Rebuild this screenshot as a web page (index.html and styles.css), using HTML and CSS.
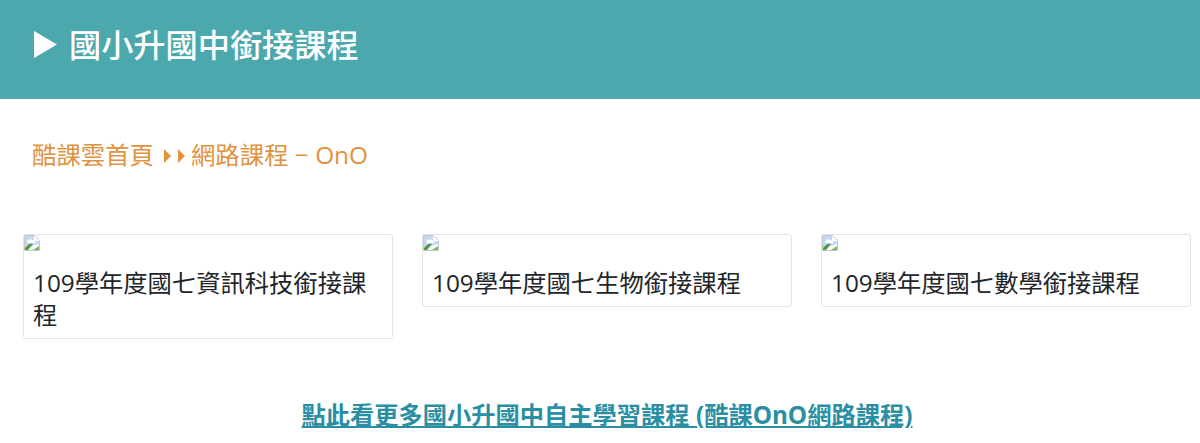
FILE: index.html
```html
<!DOCTYPE html>
<html lang="zh-Hant">
<head>
<meta charset="utf-8">
<title>國小升國中銜接課程</title>
<link rel="stylesheet" href="styles.css">
</head>
<body>
    <header class="banner">
        <svg class="bannerArrow" viewBox="0 0 23 27" width="23" height="27"><path d="M0 0L23 13.5L0 27Z" fill="#fff"/></svg>
        <h1 class="bannerTitle">國小升國中銜接課程</h1>
    </header>
    <p class="breadcrumb">
        <span>酷課雲首頁</span>
        <svg class="crumbArrows" viewBox="0 0 21 14" width="21" height="14"><path d="M0 0L7 7L0 14Z M14 0L21 7L14 14Z" fill="#e0923f"/></svg>
        <span>網路課程 − OnO</span>
    </p>
    <section class="cards">
        <a class="card" href="#">
            <svg class="brokenImg" viewBox="0 0 16 16" width="16" height="16">
                <path d="M0.5 0.5H10.5L15.5 5.5V15.5H0.5Z" fill="#fff" stroke="#c4c8cc"/>
                <path d="M1 1H10V6H15V9L1 13Z" fill="#c5d9f4"/>
                <path d="M3 6C5 4 8 4 10 6L12 8H4Z" fill="#fff"/>
                <path d="M1 15V13C4 9 7 8 9 9L4 15Z" fill="#4f9a3f"/>
                <path d="M9 15L15 11V15Z" fill="#7cb468"/>
            </svg>
            <span class="cardTitle">109學年度國七資訊科技銜接課程</span>
        </a>
        <a class="card" href="#">
            <svg class="brokenImg" viewBox="0 0 16 16" width="16" height="16">
                <path d="M0.5 0.5H10.5L15.5 5.5V15.5H0.5Z" fill="#fff" stroke="#c4c8cc"/>
                <path d="M1 1H10V6H15V9L1 13Z" fill="#c5d9f4"/>
                <path d="M3 6C5 4 8 4 10 6L12 8H4Z" fill="#fff"/>
                <path d="M1 15V13C4 9 7 8 9 9L4 15Z" fill="#4f9a3f"/>
                <path d="M9 15L15 11V15Z" fill="#7cb468"/>
            </svg>
            <span class="cardTitle">109學年度國七生物銜接課程</span>
        </a>
        <a class="card" href="#">
            <svg class="brokenImg" viewBox="0 0 16 16" width="16" height="16">
                <path d="M0.5 0.5H10.5L15.5 5.5V15.5H0.5Z" fill="#fff" stroke="#c4c8cc"/>
                <path d="M1 1H10V6H15V9L1 13Z" fill="#c5d9f4"/>
                <path d="M3 6C5 4 8 4 10 6L12 8H4Z" fill="#fff"/>
                <path d="M1 15V13C4 9 7 8 9 9L4 15Z" fill="#4f9a3f"/>
                <path d="M9 15L15 11V15Z" fill="#7cb468"/>
            </svg>
            <span class="cardTitle">109學年度國七數學銜接課程</span>
        </a>
    </section>
    <p class="moreLine"><a class="moreLink" href="#">點此看更多國小升國中自主學習課程 (酷課OnO網路課程)</a></p>
</body>
</html>
```

FILE: styles.css
```css
* {
    box-sizing: border-box;
    margin: 0;
    padding: 0;
}
body {
    background-color: white;
    color: #212529;
    font-family: "Open Sans", "Noto Sans CJK TC", sans-serif;
    height: 443px;
    overflow: hidden;
}
.banner {
    background-color: #4ba8ac;
    height: 99px;
    padding: 0 34px 10px;
    display: flex;
    align-items: center;
    gap: 12px;
}
.bannerTitle {
    color: white;
    font-size: 32.2px;
    font-weight: 500;
    line-height: 48px;
}
.breadcrumb {
    color: #e0923f;
    font-size: 24.4px;
    line-height: 36px;
    margin-top: 38px;
    padding-left: 32px;
    display: flex;
    align-items: center;
    gap: 10px;
}
.crumbArrows {
    margin-right: -4px;
    margin-top: 2px;
}
.cards {
    display: flex;
    align-items: flex-start;
    gap: 29px;
    margin-top: 61px;
    padding-left: 23px;
}
.card {
    display: block;
    width: 370px;
    background-color: white;
    border: 1px solid #e3e3e3;
    border-radius: 3px;
    color: #212529;
    text-decoration: none;
}
.brokenImg {
    display: block;
}
.cardTitle {
    display: block;
    font-size: 24.3px;
    line-height: 32px;
    padding: 16px 9px 7px;
}
.moreLine {
    margin-top: 58px;
    padding-left: 14px;
    text-align: center;
    font-size: 24.25px;
    font-weight: 700;
    line-height: 36px;
}
.moreLink {
    color: #2b8fa3;
}
```
